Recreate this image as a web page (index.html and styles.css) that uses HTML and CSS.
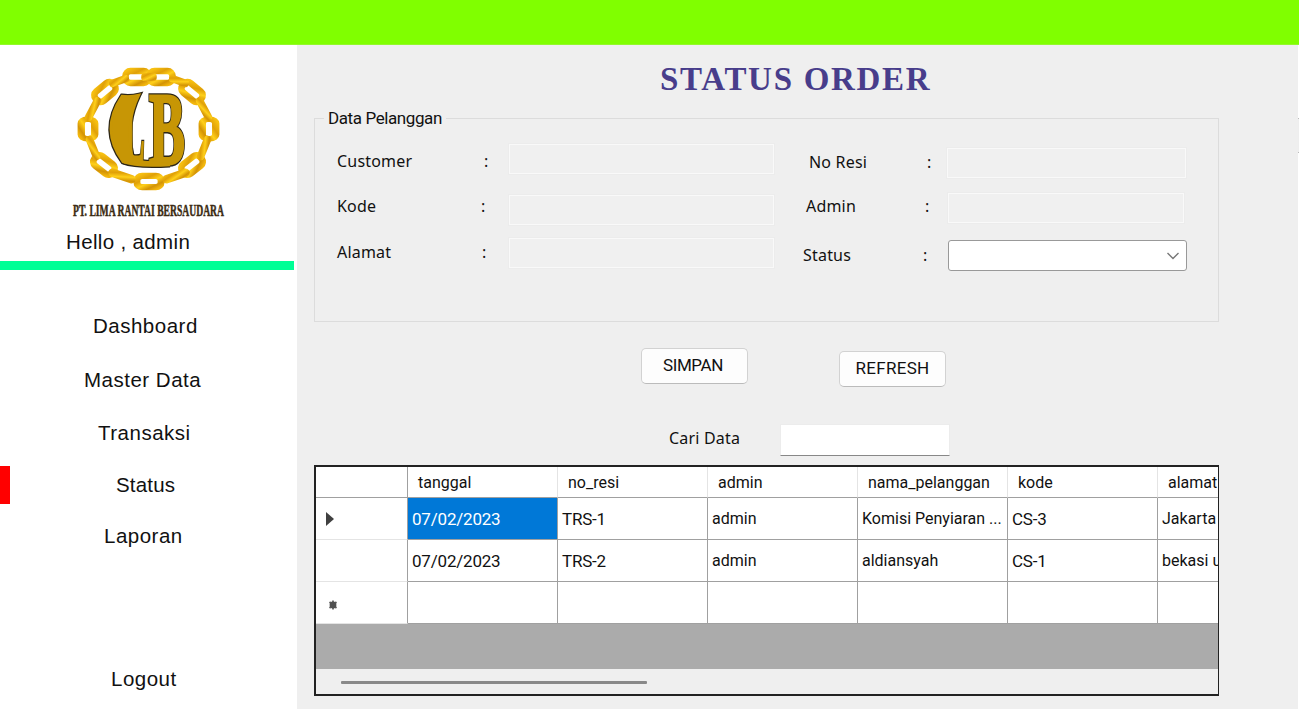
FILE: index.html
```html
<!DOCTYPE html>
<html lang="id">
<head>
<meta charset="utf-8">
<title>Status Order</title>
<link rel="stylesheet" href="styles.css">
</head>
<body>
<header class="topbar"></header>
<div class="app">
  <aside class="sidebar">
    <svg class="logo" viewBox="50 50 200 175" width="200" height="175">
      <defs>
        <linearGradient id="gold" x1="0" y1="0" x2="1" y2="1">
          <stop offset="0" stop-color="#f7c011"/><stop offset=".3" stop-color="#e0a007"/>
          <stop offset=".55" stop-color="#ffd01a"/><stop offset=".8" stop-color="#d39305"/><stop offset="1" stop-color="#f3b70d"/>
        </linearGradient>
        <g id="link"><rect x="-11.500" y="-6" width="23" height="12" rx="5" fill="none" stroke="url(#gold)" stroke-width="6.600"/></g>
        <g id="bar"><rect x="-13" y="-3.800" width="26" height="7.600" rx="3.800" fill="url(#gold)"/></g>
        <g id="mono">
          <text transform="translate(149 163.500) scale(.6 1.160)" font-size="90">B</text>
          <text transform="translate(124 162) scale(.36 1.160)" font-size="86">L</text>
          <path d="M122 96Q99 130 123 162Q136 167 170 165L150 162Q137 163 132 155Q125 124 139 95Q131 97 122 96Z"/>
        </g>
      </defs>
      <use href="#link" transform="translate(137 77)"/>
      <use href="#link" transform="translate(161 77)"/>
      <use href="#bar" transform="translate(149 77) scale(.6 1)"/>
      <use href="#link" transform="translate(105 92) rotate(-40)"/>
      <use href="#link" transform="translate(192 92) rotate(40)"/>
      <use href="#link" transform="translate(88 129) rotate(90) scale(.85 1.120)"/>
      <use href="#link" transform="translate(209 129) rotate(90) scale(.85 1.120)"/>
      <use href="#link" transform="translate(104 165) rotate(38)"/>
      <use href="#link" transform="translate(192 165) rotate(-38)"/>
      <use href="#link" transform="translate(149 181.500) scale(1.050 .95)"/>
      <use href="#bar" transform="translate(119 81) rotate(-20) scale(.8 1)"/>
      <use href="#bar" transform="translate(179 81) rotate(20) scale(.8 1)"/>
      <use href="#bar" transform="translate(93 109) rotate(-62)"/>
      <use href="#bar" transform="translate(204 109) rotate(62)"/>
      <use href="#bar" transform="translate(93 148) rotate(68)"/>
      <use href="#bar" transform="translate(204 148) rotate(-68)"/>
      <use href="#bar" transform="translate(122 176) rotate(19) scale(1.1)"/>
      <use href="#bar" transform="translate(176 176) rotate(-19) scale(1.1)"/>
      <use class="mono outline" href="#mono"/>
      <use class="mono" href="#mono"/>
      <text class="company" x="73" y="216" textLength="151" lengthAdjust="spacingAndGlyphs">PT. LIMA RANTAI BERSAUDARA</text>
    </svg>
    <p class="hello">Hello , admin</p>
    <div class="divider"></div>
    <nav class="nav">
      <a class="dashboard">Dashboard</a>
      <a class="master">Master Data</a>
      <a class="transaksi">Transaksi</a>
      <a class="status">Status</a>
      <a class="laporan">Laporan</a>
      <a class="logout">Logout</a>
    </nav>
  </aside>
  <main class="main">
    <h1 class="title">STATUS ORDER</h1>
    <fieldset class="panel">
      <legend>Data Pelanggan</legend>
      <div class="fields">
        <div class="col left">
          <div class="row customer"><label>Customer</label><i>:</i><span class="box"></span></div>
          <div class="row kode"><label>Kode</label><i>:</i><span class="box"></span></div>
          <div class="row alamat"><label>Alamat</label><i>:</i><span class="box"></span></div>
        </div>
        <div class="col right">
          <div class="row resi"><label>No Resi</label><i>:</i><span class="box"></span></div>
          <div class="row adm"><label>Admin</label><i>:</i><span class="box"></span></div>
          <div class="row stat"><label>Status</label><i>:</i><span class="select"><svg width="14" height="8" viewBox="0 0 14 8"><path d="M1.500 1L7 6.500L12.500 1" fill="none" stroke="#777" stroke-width="1.400"/></svg></span></div>
        </div>
      </div>
    </fieldset>
    <div class="actions">
      <button class="btn">SIMPAN</button>
      <button class="btn refresh">REFRESH</button>
    </div>
    <div class="search"><label>Cari Data</label><span class="search-box"></span></div>
    <section class="grid">
      <div class="line head"><b></b><span>tanggal</span><span>no_resi</span><span>admin</span><span>nama_pelanggan</span><span>kode</span><span>alamat</span></div>
      <div class="line"><b><svg width="8" height="14" viewBox="0 0 8 14"><path d="M0 0L8 7L0 14Z" fill="#404040"/></svg></b><span class="sel num">07/02/2023</span><span class="code">TRS-1</span><span>admin</span><span>Komisi Penyiaran ...</span><span class="code">CS-3</span><span>Jakarta</span></div>
      <div class="line"><b></b><span class="num">07/02/2023</span><span class="code">TRS-2</span><span>admin</span><span>aldiansyah</span><span class="code">CS-1</span><span>bekasi u</span></div>
      <div class="line"><b class="new"><svg width="10" height="10" viewBox="0 0 10 10"><path d="M5 .5V9.500M1.500 2L8.500 8M1.500 8L8.500 2" stroke="#666" stroke-width="1.800"/><circle cx="5" cy="5" r="3.400" fill="#505050"/></svg></b><span></span><span></span><span></span><span></span><span></span><span></span></div>
      <div class="scroll"><div class="thumb"></div></div>
    </section>
  </main>
  <div class="edge"><div class="edge-control"></div></div>
</div>
</body>
</html>
```

FILE: styles.css
```css
* { box-sizing: border-box; }
body { margin: 0; width: 1299px; height: 709px; overflow: hidden; background: #efefef; color: #111; font-family: "Liberation Sans", Arial, sans-serif; }
.topbar { height: 45px; background: #80ff00; border-bottom: 1px solid #93f82c; }
.app { display: flex; height: 664px; }

.sidebar { width: 297px; background: #fff; padding-top: 5px; font-size: 20.5px; line-height: 24px; white-space: nowrap; }
.logo { display: block; margin-left: 50px; }
.mono { font-family: "Liberation Serif", serif; font-weight: bold; fill: #c79605; stroke: #c79605; stroke-width: 2.4; }
.mono.outline { stroke: #2c2617; stroke-width: 4.8; }
.company { font: bold 17px "Liberation Serif", serif; fill: #3a2a12; stroke: #3a2a12; stroke-width: .5px; }
.hello { margin: 5px 0 0 66px; letter-spacing: .35px; }
.divider { width: 294px; height: 9px; margin-top: 7px; background: #00ff96; }
.nav { display: flex; flex-direction: column; padding-top: 37px; }
.nav a { height: 38px; line-height: 38px; letter-spacing: .5px; }
.nav .dashboard { padding-left: 93px; }
.nav .master { margin-top: 16px; padding-left: 84px; }
.nav .transaksi { margin-top: 15px; padding-left: 98px; }
.nav .status { margin-top: 14px; padding-left: 106px; border-left: 10px solid #f00; letter-spacing: .2px; }
.nav .laporan { margin-top: 13px; padding-left: 104px; }
.nav .logout { margin-top: 105px; padding-left: 111px; }

.main { width: 1001px; padding-left: 17px; white-space: nowrap; }
.title { margin: 14px 0 0 346px; height: 47px; font: bold 33px/40px "Liberation Serif", serif; letter-spacing: 1.7px; color: #483d8b; }
.panel { width: 905px; height: 216px; margin: 0; padding: 0; border: 1px solid #dcdcdc; }
.panel legend { margin-left: 9px; padding: 0 4px; height: 24px; font: 17px/24px Roboto, sans-serif; letter-spacing: -.4px; }
.fields { display: flex; font: 16px/22px "Noto Sans", sans-serif; letter-spacing: .2px; }
.row { display: flex; align-items: flex-start; }
.row i { font-style: normal; width: 25px; }
.col.left { width: 470px; padding: 14px 0 0 22px; }
.box { width: 265px; height: 30px; border: 1px solid #f9f9f9; outline: 1px solid #ececec; background: #f0f0f0; }
.left label { width: 147px; }
.customer label, .customer i { margin-top: 6px; }
.kode { margin-top: 21px; }
.left .kode label { width: 144px; }
.kode i { width: 28px; }
.alamat { margin-top: 13px; }
.alamat label, .alamat i { margin-top: 3px; }
.left .alamat label { width: 145px; }
.alamat i { width: 27px; }
.col.right { padding-top: 18px; }
.resi { padding-left: 24px; }
.resi label { width: 118px; margin-top: 3px; }
.resi i { margin-top: 3px; width: 20px; }
.resi .box { width: 239px; }
.adm { margin-top: 15px; padding-left: 21px; }
.adm label { width: 119px; margin-top: 2px; }
.adm i { margin-top: 2px; width: 23px; }
.adm .box { width: 236px; }
.stat { margin-top: 17px; padding-left: 18px; }
.stat label { width: 120px; margin-top: 4px; }
.stat i { margin-top: 4px; }
.select { display: flex; align-items: center; justify-content: flex-end; width: 239px; height: 31px; padding-right: 6px; border: 1px solid #999; border-radius: 3px; background: #fff; }

.actions { display: flex; align-items: flex-start; height: 62px; padding: 26px 0 0 327px; }
.btn { width: 107px; height: 36px; padding: 0 3px 2px 0; border: 1px solid #d2d2d2; border-bottom-color: #bbb; border-radius: 5px; background: #fdfdfd; color: #111; font: 17px Roboto, sans-serif; letter-spacing: -.4px; }
.btn.refresh { margin: 3px 0 0 91px; padding-right: 0; letter-spacing: .3px; }
.search { display: flex; height: 81px; padding: 40px 0 0 355px; font: 16px/28px "Noto Sans", sans-serif; letter-spacing: .2px; }
.search label { width: 111px; }
.search-box { width: 170px; height: 32px; background: #fff; border: 1px solid #ececec; border-bottom: 1px solid #888; }

.grid { width: 905px; height: 231px; overflow: hidden; border: 2px solid #222; border-width: 2px 1px 2px 2px; background: #ababab; font: 16px Roboto, sans-serif; }
.line { display: grid; grid-template-columns: 92px repeat(5, 150px) 60px; height: 42px; }
.line b, .line span { display: flex; align-items: center; background: #fff; border-bottom: 1px solid #a0a0a0; border-right: 1px solid #a0a0a0; overflow: hidden; white-space: pre; }
.line b { border-bottom-color: #e4e4e4; padding-left: 10px; }
.line b.new { padding: 4px 0 0 12px; }
.line span { padding-left: 4px; }
.line span:last-child { border-right: 0; }
.line .num, .line .code { font-size: 17px; letter-spacing: -.2px; }
.line .sel { background: #0078d7; color: #fff; }
.head { height: 31px; }
.head span { padding-left: 10px; border-right-color: #e4e4e4; }
.head b { border-bottom-color: #a0a0a0; }
.scroll { height: 26px; margin-top: 45px; padding: 12px 0 0 25px; background: #efefef; }
.thumb { width: 306px; height: 3px; border-radius: 1px; background: #898989; }
.edge { width: 1px; background: #fff; padding-top: 73px; }
.edge-control { height: 35px; background: #eee; border: solid #bbb; border-width: 1px 0; }
```
